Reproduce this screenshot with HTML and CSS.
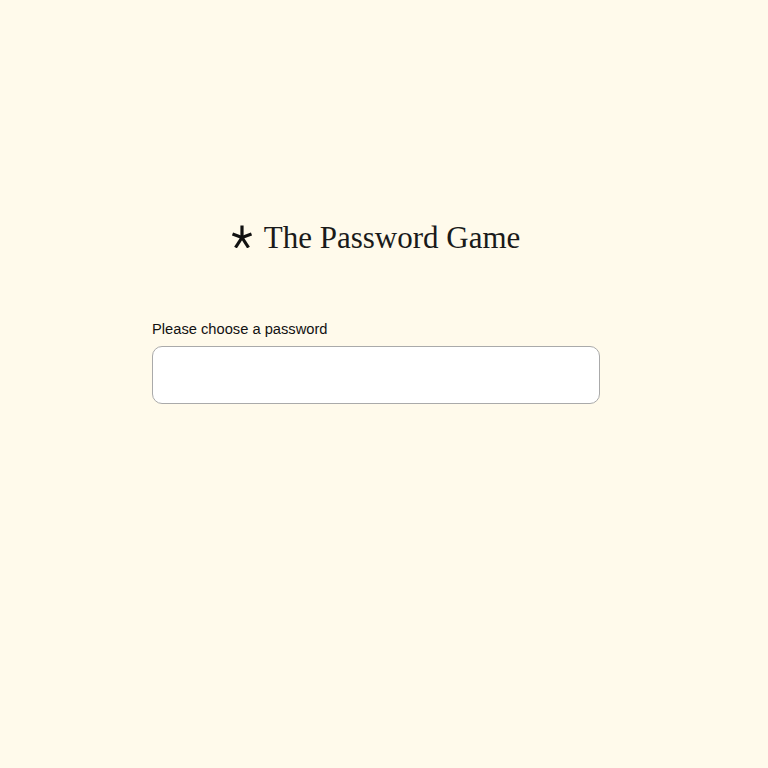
FILE: index.html
```html
<!DOCTYPE html>
<html>
<head>
<meta charset="utf-8">
<link rel="stylesheet" href="styles.css">
</head>
<body>
<div class="page">
  <h1 class="title"><svg class="star" width="20" height="23" viewBox="0 0 20 23"><g stroke="#111" stroke-width="3.2" stroke-linecap="butt"><line x1="10" y1="12.5" x2="10" y2="0.5"/><line x1="10" y1="12.5" x2="0.5" y2="9"/><line x1="10" y1="12.5" x2="19.5" y2="9"/><line x1="10" y1="12.5" x2="3.5" y2="22.5"/><line x1="10" y1="12.5" x2="16.5" y2="22.5"/></g></svg><span class="name">The Password Game</span></h1>
  <div class="form">
    <label class="label">Please choose a password</label>
    <div class="box"></div>
  </div>
</div>
</body>
</html>
```
FILE: styles.css
```css
html, body {
  margin: 0;
  padding: 0;
  background: #fffaeb;
}
.page {
  width: 752px;
  padding-top: 217px;
  display: flex;
  flex-direction: column;
  align-items: center;
}
.title {
  margin: 0;
  display: flex;
  align-items: center;
  gap: 12px;
  font-family: "Liberation Serif", serif;
  font-weight: normal;
  font-size: 31px;
  color: #1a1a1a;
  line-height: 42px;
}
.star {
  display: block;
  margin-top: -3px;
}
.form {
  width: 448px;
  margin-top: 61px;
  display: flex;
  flex-direction: column;
}
.label {
  font-family: "Liberation Sans", Arial, sans-serif;
  font-size: 14.7px;
  color: #111;
  line-height: 18px;
  margin-bottom: 8px;
}
.box {
  height: 56px;
  background: #fff;
  border: 1px solid #aaa;
  border-radius: 10px;
}
```
